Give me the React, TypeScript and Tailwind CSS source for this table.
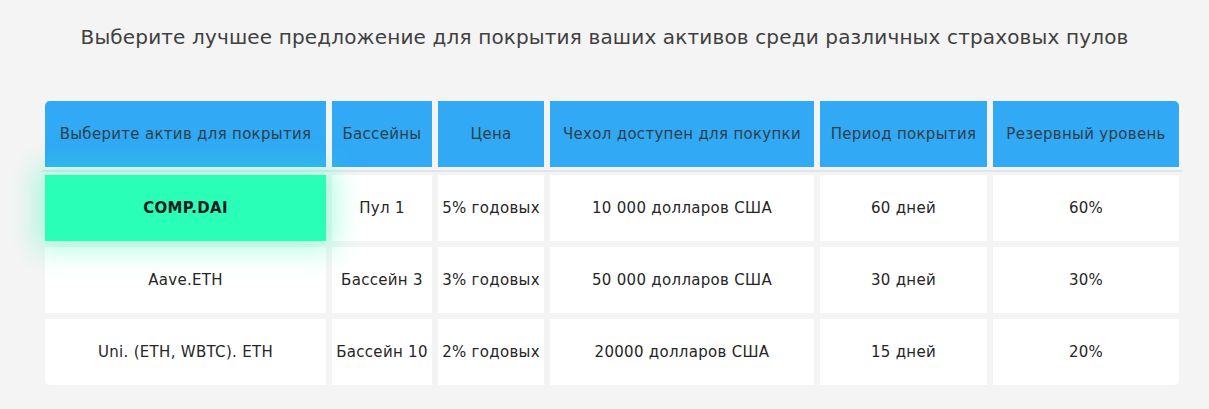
import React from 'react';

const columns = [
  'Выберите актив для покрытия',
  'Бассейны',
  'Цена',
  'Чехол доступен для покупки',
  'Период покрытия',
  'Резервный уровень',
];

const rows = [
  ['COMP.DAI', 'Пул 1', '5% годовых', '10 000 долларов США', '60 дней', '60%'],
  ['Aave.ETH', 'Бассейн 3', '3% годовых', '50 000 долларов США', '30 дней', '30%'],
  ['Uni. (ETH, WBTC). ETH', 'Бассейн 10', '2% годовых', '20000 долларов США', '15 дней', '20%'],
];

const grid = 'grid grid-cols-[281px_100px_106px_264px_167px_186px] gap-x-[6px]';

export default function App() {
  return (
    <div
      className="min-h-[409px] w-full bg-[#f4f4f4] pt-[22px]"
      style={{ fontFamily: '"DejaVu Sans", "Noto Sans", sans-serif' }}
    >
      <h1 className="text-center text-[20px] leading-[30px] font-normal text-[#404040] tracking-[0.15px]">
        Выберите лучшее предложение для покрытия ваших активов среди различных страховых пулов
      </h1>

      <div className="ml-[45px] mt-[49px] w-[1134px]">
        {/* header */}
        <div className={grid}>
          {columns.map((c, i) => (
            <div
              key={c}
              className={`flex h-[66px] items-center justify-center whitespace-nowrap bg-[#31a9f5] text-[15px] tracking-[0.3px] text-[#2f3f4a] ${
                i === 0 ? 'rounded-tl-[5px]' : ''
              } ${i === columns.length - 1 ? 'rounded-tr-[5px]' : ''}`}
            >
              {c}
            </div>
          ))}
        </div>

        <div className="-mx-[3px] mt-[3px] h-[2px] bg-[#e1e5e9]" />

        {/* body */}
        <div className="mt-[3px] flex flex-col gap-y-[6px]">
          {rows.map((r, ri) => (
            <div key={ri} className={grid}>
              {r.map((v, ci) => {
                const active = ri === 0 && ci === 0;
                const last = ri === rows.length - 1;
                return (
                  <div
                    key={ci}
                    className={`flex h-[66px] items-center justify-center whitespace-nowrap text-[15px] tracking-[0.3px] ${
                      active
                        ? 'relative z-10 bg-[#2affb8] font-bold text-[#1c1c1c] shadow-[0_0_26px_8px_rgba(42,255,184,0.4)]'
                        : 'bg-white text-[#262626]'
                    } ${last && ci === 0 ? 'rounded-bl-[5px]' : ''} ${
                      last && ci === r.length - 1 ? 'rounded-br-[5px]' : ''
                    }`}
                  >
                    {v}
                  </div>
                );
              })}
            </div>
          ))}
        </div>
      </div>
    </div>
  );
}
